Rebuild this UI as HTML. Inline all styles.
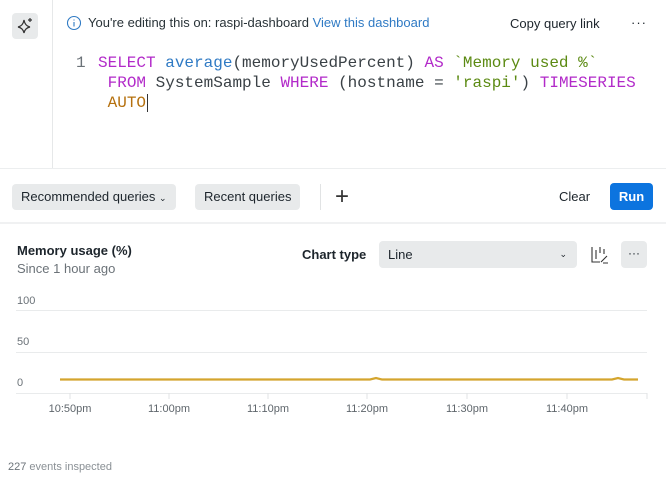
<!DOCTYPE html>
<html><head><style>
body{margin:0;width:666px;height:478px;background:#fff;font-family:"Liberation Sans",sans-serif;position:relative;overflow:hidden;color:#1d252c}
.a{position:absolute}
.mono{font-family:"Liberation Mono",monospace;font-size:16px;white-space:pre}
.btn{position:absolute;background:#e8eaeb;border-radius:4px;font-size:13px;height:26px;line-height:26px;padding:0 9px;color:#1d252c}
.k{color:#b22ac9}.f{color:#2f7ac4}.s{color:#5b8a12}.o{color:#b5700e}.t{color:#3a4146}
.g{position:absolute;left:16px;width:631px;height:1px;background:#e9ebec}
.yl{position:absolute;left:17px;font-size:11px;color:#6b7278}
.xl{position:absolute;top:403px;font-size:11px;color:#5f666c;width:60px;text-align:center}
</style></head><body>
<div class="a" style="left:52px;top:0;width:1px;height:169px;background:#e6e8e9"></div>
<div class="a" style="left:0;top:168px;width:666px;height:1px;background:#eceeef"></div>
<div class="a" style="left:0;top:222px;width:666px;height:2px;background:#f0f1f2"></div>
<div class="a" style="left:12px;top:13px;width:26px;height:26px;background:#e8eaeb;border-radius:4px"></div>
<svg class="a" style="left:14px;top:15px" width="22" height="22" viewBox="0 0 22 22" fill="none" stroke="#333" stroke-width="1.2"><path d="M10 5 Q11 11 16 12 Q11 13 10 18 Q9 13 4 12 Q9 11 10 5Z"/><path d="M16 3v4M14 5h4"/></svg>
<svg class="a" style="left:66px;top:15px" width="16" height="16" viewBox="0 0 16 16" fill="none" stroke="#2f7ac4" stroke-width="1.1"><circle cx="8" cy="8" r="6.5"/><path d="M8 7v4.5M8 4.5v1"/></svg>
<div class="a" style="left:88px;top:15px;font-size:13px;color:#293338">You're editing this on: raspi-dashboard <span style="color:#2f7ac4">View this dashboard</span></div>
<div class="a" style="left:510px;top:16px;font-size:13px">Copy query link</div>
<div class="a" style="left:631px;top:15px;font-size:13px;letter-spacing:1px">···</div>
<div class="a mono" style="left:76px;top:54px;color:#6b7278">1</div>
<div class="a mono" style="left:98px;top:54px"><span class="k">SELECT</span> <span class="f">average</span><span class="t">(memoryUsedPercent)</span> <span class="k">AS</span> <span class="s">`Memory used %`</span></div>
<div class="a mono" style="left:98px;top:74px"> <span class="k">FROM</span> <span class="t">SystemSample</span> <span class="k">WHERE</span> <span class="t">(hostname = </span><span class="s">'raspi'</span><span class="t">)</span> <span class="k">TIMESERIES</span></div>
<div class="a mono" style="left:98px;top:94px"> <span class="o">AUTO</span><span style="border-left:1px solid #333;margin-left:1px"></span></div>
<div class="btn" style="left:12px;top:184px">Recommended queries <span style="font-size:9px">⌄</span></div>
<div class="btn" style="left:195px;top:184px">Recent queries</div>
<div class="a" style="left:320px;top:184px;width:1px;height:26px;background:#e1e3e4"></div>
<div class="a" style="left:335px;top:183px;font-size:24px;font-weight:300;color:#333">+</div>
<div class="a" style="left:559px;top:189px;font-size:13px">Clear</div>
<div class="a" style="left:610px;top:183px;width:43px;height:27px;background:#0c74df;border-radius:4px;color:#fff;font-size:13px;font-weight:bold;line-height:27px;text-align:center">Run</div>
<div class="a" style="left:17px;top:243px;font-size:13px;font-weight:bold">Memory usage (%)</div>
<div class="a" style="left:17px;top:261px;font-size:13px;color:#6b7278">Since 1 hour ago</div>
<div class="a" style="left:302px;top:247px;font-size:13px;font-weight:bold">Chart type</div>
<div class="a" style="left:379px;top:241px;width:198px;height:27px;background:#e8eaeb;border-radius:4px;font-size:13px;line-height:27px"><span style="margin-left:9px">Line</span><span style="position:absolute;right:10px;font-size:9px">⌄</span></div>
<svg class="a" style="left:590px;top:245px" width="20" height="20" viewBox="0 0 20 20" fill="none" stroke="#333" stroke-width="1.1"><path d="M2 2v15h8M6 5v9M10 2v6M14 4v5M11 17l6-6M13 18h5"/></svg>
<div class="a" style="left:621px;top:241px;width:26px;height:27px;background:#e8eaeb;border-radius:4px;text-align:center;font-size:12px;line-height:24px">···</div>
<div class="yl" style="top:295px">100</div><div class="g" style="top:310px"></div>
<div class="yl" style="top:336px">50</div><div class="g" style="top:352px"></div>
<div class="yl" style="top:377px">0</div><div class="g" style="top:393px"></div>
<svg class="a" style="left:0;top:393px" width="666" height="12"><g stroke="#e1e3e4"><path d="M70 0v6M169 0v6M268 0v6M367 0v6M467 0v6M567 0v6M647 0v6"/></g></svg>
<div class="xl" style="left:40px">10:50pm</div><div class="xl" style="left:139px">11:00pm</div><div class="xl" style="left:238px">11:10pm</div><div class="xl" style="left:337px">11:20pm</div><div class="xl" style="left:437px">11:30pm</div><div class="xl" style="left:537px">11:40pm</div>
<svg class="a" style="left:0;top:370px" width="666" height="20"><path d="M60 9.5H370L376 8L382 9.5H612L618 8L624 9.5H638" stroke="#d4a52e" stroke-width="2.2" fill="none"/></svg>
<div class="a" style="left:8px;top:461px;font-size:11px;color:#8a9095"><span style="color:#6b7278">227</span> events inspected</div>
</body></html>
